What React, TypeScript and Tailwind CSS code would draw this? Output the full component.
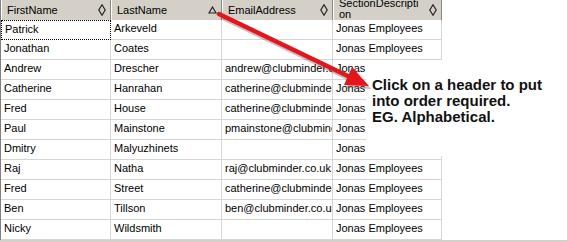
import React from 'react';

// section column text for rows hidden behind the note is only partly visible
const rows = [
  ['Patrick', 'Arkeveld', '', 'Jonas Employees'],
  ['Jonathan', 'Coates', '', 'Jonas Employees'],
  ['Andrew', 'Drescher', 'andrew@clubminder.co.uk', 'Jonas'],
  ['Catherine', 'Hanrahan', 'catherine@clubminder.co.uk', 'Jonas'],
  ['Fred', 'House', 'catherine@clubminder.co.uk', 'Jonas'],
  ['Paul', 'Mainstone', 'pmainstone@clubminder.co.uk', 'Jonas'],
  ['Dmitry', 'Malyuzhinets', '', 'Jonas'],
  ['Raj', 'Natha', 'raj@clubminder.co.uk', 'Jonas Employees'],
  ['Fred', 'Street', 'catherine@clubminder.co.uk', 'Jonas Employees'],
  ['Ben', 'Tillson', 'ben@clubminder.co.uk', 'Jonas Employees'],
  ['Nicky', 'Wildsmith', '', 'Jonas Employees'],
];

function Diamond() {
  return (
    <svg width="8" height="12" viewBox="0 0 8 12" className="shrink-0">
      <path d="M4 0.8 L7.2 6 L4 11.2 L0.8 6 Z" fill="none" stroke="#222" strokeWidth="1.2" />
    </svg>
  );
}

function SortUp() {
  return (
    <svg width="9" height="8" viewBox="0 0 9 8" className="shrink-0">
      <path d="M4.5 1 L8 7 L1 7 Z" fill="none" stroke="#222" strokeWidth="1.2" />
    </svg>
  );
}

function HeaderCell({ children, icon }: { children: React.ReactNode; icon: React.ReactNode }) {
  return (
    <div className="flex h-[20px] items-center justify-between overflow-hidden border-r border-r-[#8a8780] border-l border-l-white bg-[#d4d0c8] pl-[5px] pr-[4px]">
      {children}
      {icon}
    </div>
  );
}

export default function App() {
  return (
    <div
      className="relative h-[242px] w-[567px] overflow-hidden bg-white text-[11px] text-black"
      style={{ fontFamily: '"Liberation Sans", Arial, sans-serif' }}
    >
      <div className="grid w-[441px] grid-cols-[110px_111px_111px_109px] border-l border-l-[#808080]">
        <HeaderCell icon={<Diamond />}>
          <span className="truncate">FirstName</span>
        </HeaderCell>
        <HeaderCell icon={<SortUp />}>
          <span className="truncate">LastName</span>
        </HeaderCell>
        <HeaderCell icon={<Diamond />}>
          <span className="truncate">EmailAddress</span>
        </HeaderCell>
        <HeaderCell icon={<Diamond />}>
          <span className="-mt-[3px] w-[82px] break-all leading-[11px]">SectionDescription</span>
        </HeaderCell>

        {rows.map((r, i) =>
          r.map((cell, j) => (
            <div
              key={i + '-' + j}
              className={`h-[20px] overflow-hidden whitespace-nowrap border-b border-r border-[#d6d6d6] pl-[3px] pt-[1px] leading-[14px] ${
                i === 0 && j === 0 ? 'border border-dotted border-black pl-[2px] pt-0' : ''
              }`}
            >
              {cell}
            </div>
          ))
        )}
      </div>
      <div className="h-[3px] w-full bg-[#d4d0c8]" />

      {/* note over the grid */}
      <div className="absolute left-[366px] top-[60px] h-[96px] w-[201px] bg-white pl-[6px] pt-[17px] text-[15px] font-bold leading-[16px] text-[#111]">
        <p>Click on a header to put</p>
        <p>into order required.</p>
        <p>EG. Alphabetical.</p>
      </div>

      <svg className="pointer-events-none absolute left-0 top-0" width="567" height="242">
        <g opacity="0.35" transform="translate(2 3)">
          <line x1="219" y1="14" x2="352" y2="78" stroke="#555" strokeWidth="4.5" />
          <polygon points="369,86 344,85 352,67" fill="#555" />
        </g>
        <line x1="219" y1="14" x2="352" y2="78" stroke="#e8141b" strokeWidth="4.5" strokeLinecap="round" />
        <polygon points="369,86 344,85 352,67" fill="#e8141b" />
      </svg>
    </div>
  );
}
